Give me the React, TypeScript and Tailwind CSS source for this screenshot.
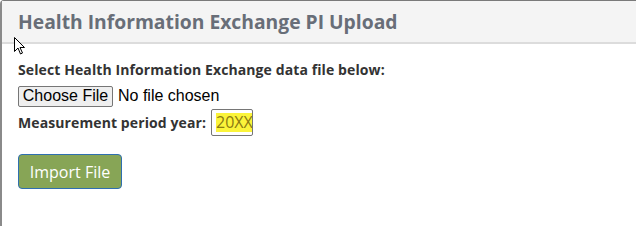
import React from "react";

export default function App() {
  return (
    <div className="relative w-[636px] h-[226px] bg-white overflow-hidden" style={{ fontFamily: '"Open Sans", sans-serif' }}>
      <div className="h-full border-t border-l-2 border-[#8a8a8a] rounded-tl-[4px] border-t-[#7a7a7a]">
        {/* Header */}
        <div className="h-[43px] bg-[#f4f4f4] border-b-2 border-[#dcdcdc] pl-[16px] pt-[8px]">
          <h1 className="text-[19.3px] leading-[26px] font-bold text-[#686e78]">
            Health Information Exchange PI Upload
          </h1>
        </div>

        {/* Body */}
        <div className="pl-[16px] pt-[16px]">
          <p className="text-[14px] leading-[20px] font-bold text-[#333] tracking-[0.1px]">
            Select Health Information Exchange data file below:
          </p>
          <div className="flex items-center mt-[5px] h-[22px]" style={{ fontFamily: '"Liberation Sans", Arial, sans-serif' }}>
            <button className="h-[21px] w-[95px] border border-[#767676] rounded-[2px] bg-[#efefef] text-[16px] text-black leading-none">
              Choose File
            </button>
            <span className="ml-[5px] text-[16px] text-black">No file chosen</span>
          </div>
          <div className="flex items-center mt-[2px]">
            <span className="text-[14px] font-bold text-[#333] tracking-[0.1px]">Measurement period year:</span>
            <div className="ml-[5px] w-[42px] h-[27px] border border-[#767676] rounded-[2px] pl-[4px] pt-[3px] overflow-hidden">
              <div className="h-[19px] bg-[#fbf43a] text-[16px] leading-[19px] text-[#8b7b12] whitespace-nowrap overflow-hidden">20XX</div>
            </div>
          </div>
          <button className="mt-[18px] w-[104px] h-[35px] bg-[#87a556] border border-[#2f6fb0] rounded-[4px] text-white text-[16px] font-normal">
            Import File
          </button>
        </div>
      </div>

      {/* mouse pointer */}
      <svg className="absolute left-[14px] top-[37px]" width="12" height="18" viewBox="0 0 12 18">
        <path d="M0.5 0.5 L0.5 14.5 L4 11 L6.5 17 L8.5 16 L6 10.5 L10.5 10.5 Z" fill="white" stroke="black" strokeWidth="1" strokeLinejoin="round" />
      </svg>
    </div>
  );
}
